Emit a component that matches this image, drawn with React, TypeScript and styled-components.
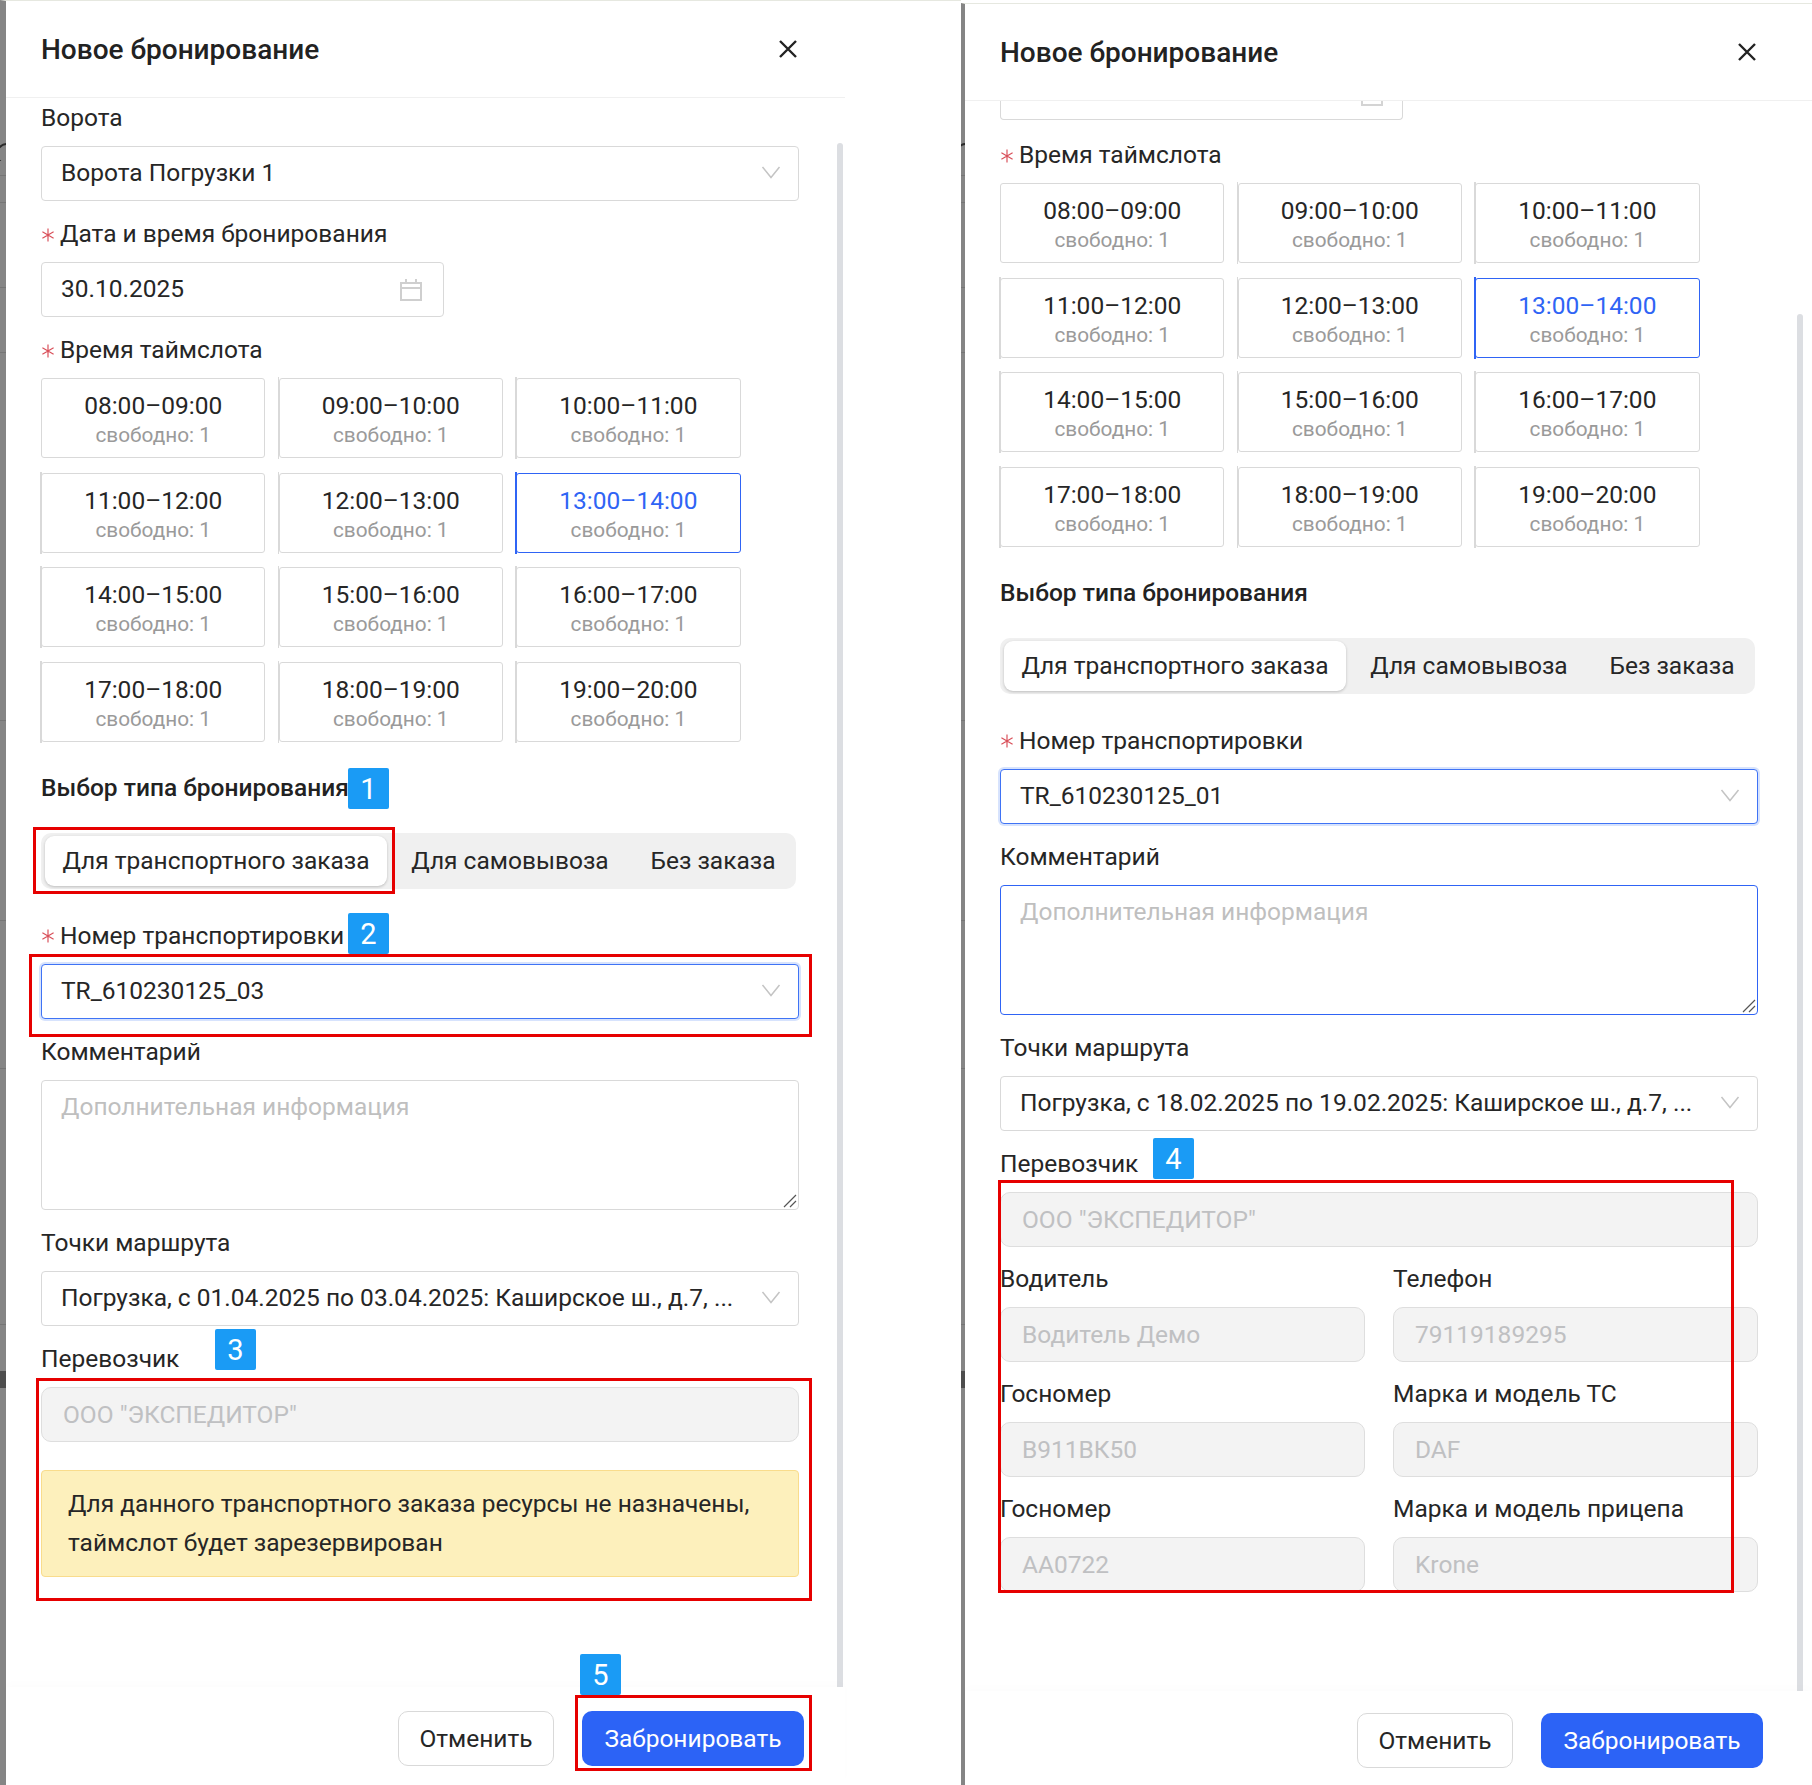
import React from 'react';
import styled, {createGlobalStyle} from 'styled-components';

const GlobalStyle = createGlobalStyle`
    html, body {
        margin: 0;
        padding: 0;
        background: #fff;
    }
    * {
        box-sizing: border-box;
    }
`;

const Page = styled.div`
    position: relative;
    width: 1812px;
    height: 1785px;
    display: grid;
    grid-template-columns: 961px 851px;
    overflow: hidden;
    background: #fff;
    font-family: Roboto, "Liberation Sans", sans-serif;
    font-size: 24.5px;
    color: #262626;
`;

const Panel = styled.section<{$top: number; $strip: number}>`
    position: relative;
    height: calc(100% - ${(p) => p.$top}px);
    margin-top: ${(p) => p.$top}px;
    display: flex;
    flex-direction: column;
    border-left: ${(p) => p.$strip}px solid #858585;
    border-top: 1px solid #e6e8e0;
`;

// what shows of the page behind the drawers in the grey strip
const BackdropLine = styled.div<{$top: number; $left: number; $width: number; $height?: number; $color?: string}>`
    position: absolute;
    top: ${(p) => p.$top}px;
    left: ${(p) => p.$left}px;
    width: ${(p) => p.$width}px;
    height: ${(p) => p.$height ?? 1}px;
    background: ${(p) => p.$color ?? '#757575'};
`;

const BackdropGlyph = styled.div<{$top: number; $left: number; $width: number}>`
    position: absolute;
    top: ${(p) => p.$top}px;
    left: ${(p) => p.$left}px;
    width: ${(p) => p.$width}px;
    height: 18px;
    overflow: hidden;

    &::before {
        content: "";
        position: absolute;
        top: 0;
        right: -12px;
        width: 18px;
        height: 18px;
        border: 2px solid #2a2a2a;
        border-radius: 50%;
    }
`;

const Header = styled.header<{$pad: number; $width: number}>`
    flex: none;
    width: ${(p) => p.$width}px;
    height: 97px;
    padding: 0 ${(p) => p.$pad}px 0 35px;
    display: flex;
    align-items: center;
    justify-content: space-between;
    border-bottom: 1px solid #f0f0f0;
`;

const Title = styled.h2`
    margin: 0;
    font-size: 28px;
    font-weight: 500;
    color: #222;
`;

const CloseButton = styled.button`
    width: 22px;
    height: 22px;
    padding: 0;
    border: 0;
    display: flex;
    background: none;
    color: #222;
`;

const Body = styled.div<{$width: number}>`
    position: relative;
    flex: 1;
    min-height: 0;
    width: ${(p) => p.$width}px;
    padding: 6px 0 0 35px;
    overflow: hidden;
`;

const Thumb = styled.div<{$top: number; $right: number}>`
    position: absolute;
    top: ${(p) => p.$top}px;
    bottom: 0;
    right: ${(p) => p.$right}px;
    width: 6px;
    border-radius: 3px 3px 0 0;
    background: #dcdee2;
`;

const Form = styled.div`
    width: 758px;
`;

const Field = styled.div<{$gap?: number}>`
    margin-bottom: ${(p) => p.$gap ?? 19}px;
`;

const Label = styled.label`
    height: 28px;
    margin-bottom: 14px;
    display: flex;
    align-items: center;
    line-height: 28px;
    color: #262626;
    white-space: nowrap;
`;

const Star = styled.svg`
    flex: none;
    width: 14px;
    height: 14px;
    margin: 1px 5px 0 0;
    color: #d9505a;
`;

const Control = styled.div<{$focus?: boolean; $width?: number}>`
    width: ${(p) => (p.$width ? `${p.$width}px` : '100%')};
    height: 55px;
    padding: 0 17px 2px 19px;
    display: flex;
    align-items: center;
    justify-content: space-between;
    border: 1px solid ${(p) => (p.$focus ? '#3f73f5' : '#d9d9d9')};
    border-radius: 4px;
    background: #fff;
    box-shadow: ${(p) => (p.$focus ? '0 0 0 2px #d7e3fd' : 'none')};
`;

const ControlText = styled.span`
    min-width: 0;
    overflow: hidden;
    white-space: nowrap;
    color: #262626;
`;

const Disabled = styled.div`
    height: 55px;
    padding: 0 21px;
    display: flex;
    align-items: center;
    border: 1px solid #dedede;
    border-radius: 10px;
    background: #f3f3f3;
    color: #bfc0c2;
`;

const DateStub = styled.div`
    position: relative;
    width: 403px;
    height: 19px;
    margin: -6px 0 21px;
    border: 1px solid #d9d9d9;
    border-top: 0;
    border-radius: 0 0 4px 4px;
`;

const DateStubIcon = styled.div`
    position: absolute;
    top: 0;
    right: 19px;
    width: 22px;
    height: 5px;
    border: 2px solid #d4d4d4;
    border-top: 0;
`;

const SlotGrid = styled.div`
    display: grid;
    grid-template-columns: repeat(3, 224.4px);
    grid-auto-rows: 80px;
    column-gap: 13.2px;
    row-gap: 14.5px;
`;

const Slot = styled.div<{$active?: boolean; $first?: boolean}>`
    position: relative;
    padding-top: 4px;
    display: flex;
    flex-direction: column;
    align-items: center;
    justify-content: center;
    border: 1px solid ${(p) => (p.$active ? '#2f64f5' : '#d9d9d9')};
    border-radius: 3px;
    color: ${(p) => (p.$active ? '#2f64f5' : '#262626')};

    &::before {
        content: ${(p) => (p.$first ? 'none' : '""')};
        position: absolute;
        top: -2px;
        bottom: -2px;
        left: -2px;
        width: 1.5px;
        background: ${(p) => (p.$active ? '#2f64f5' : '#d9d9d9')};
    }
`;

const SlotTime = styled.div`
    line-height: 30px;
`;

const SlotFree = styled.div`
    margin-top: 1px;
    font-size: 20.8px;
    line-height: 27px;
    color: #9a9a9a;
`;

const Heading = styled.h3`
    margin: 32px 0 31px;
    height: 28px;
    font-size: 24.5px;
    line-height: 28px;
    font-weight: 500;
    color: #222;
`;

const Segmented = styled.div`
    width: 755px;
    height: 56px;
    padding: 3px 3px 3px 4px;
    margin-bottom: 33px;
    display: flex;
    border-radius: 10px;
    background: #f0f0f0;
`;

const Segment = styled.div<{$active?: boolean; $width: number}>`
    flex: none;
    width: ${(p) => p.$width}px;
    display: flex;
    align-items: center;
    justify-content: center;
    border-radius: 9px;
    background: ${(p) => (p.$active ? '#fff' : 'transparent')};
    box-shadow: ${(p) => (p.$active ? '0 1px 3px rgba(0,0,0,.22)' : 'none')};
    white-space: nowrap;
`;

const TextArea = styled.div<{$focus?: boolean}>`
    position: relative;
    height: 130px;
    padding: 12px 19px;
    border: 1px solid ${(p) => (p.$focus ? '#2f64f5' : '#d9d9d9')};
    border-radius: 4px;
    line-height: 28px;
    color: #bfbfbf;
`;

const Resizer = styled.svg`
    position: absolute;
    right: 1px;
    bottom: 1px;
    width: 14px;
    height: 14px;
    color: #555;
`;

const CalendarSvg = styled.svg`
    margin: 2px 3px 0 0;
`;

const TwoColumns = styled.div`
    display: grid;
    grid-template-columns: 365px 365px;
    column-gap: 28px;
`;

const Alert = styled.div`
    height: 107px;
    margin-top: 28px;
    padding: 0 26px;
    display: flex;
    align-items: center;
    border: 1px solid #f9dc8c;
    border-radius: 4px;
    background: #fdf0bc;
    line-height: 39px;
    color: #262626;
`;

const Footer = styled.footer<{$pad: number; $height: number; $width: number; $top: number}>`
    position: relative;
    flex: none;
    width: ${(p) => p.$width}px;
    height: ${(p) => p.$height}px;
    padding: ${(p) => p.$top}px ${(p) => p.$pad}px 0 0;
    display: flex;
    justify-content: flex-end;
    gap: 28px;
    background: #fff;
    box-shadow: 0 -4px 8px rgba(0, 0, 0, .012);
`;

const ButtonBase = styled.button`
    height: 55px;
    border-radius: 10px;
    font-family: inherit;
    font-size: 24.5px;
`;

const CancelButton = styled(ButtonBase)`
    width: 156px;
    border: 1px solid #d9d9d9;
    background: #fff;
    color: #262626;
`;

const SubmitButton = styled(ButtonBase)`
    width: 222px;
    border: 0;
    background: #2c63f6;
    color: #fff;
`;

const Badge = styled.div<{$x: number; $y: number}>`
    position: absolute;
    left: ${(p) => p.$x}px;
    top: ${(p) => p.$y}px;
    width: 41px;
    height: 41px;
    display: flex;
    align-items: center;
    justify-content: center;
    background: #1a9bf5;
    border-radius: 2px;
    font-size: 29px;
    color: #fff;
`;

const Frame = styled.div<{$x: number; $y: number; $w: number; $h: number}>`
    position: absolute;
    left: ${(p) => p.$x}px;
    top: ${(p) => p.$y}px;
    width: ${(p) => p.$w}px;
    height: ${(p) => p.$h}px;
    border: 3px solid #e60000;
    pointer-events: none;
`;

const RequiredMark = () => (
    <Star viewBox="0 0 13 13" fill="none" stroke="currentColor" strokeWidth="1.1">
        <path d="M6.5 0.5 V12.5 M1.3 3.5 L11.7 9.5 M11.7 3.5 L1.3 9.5" />
    </Star>
);

const Chevron = () => (
    <svg width="20" height="13" viewBox="0 0 20 13" fill="none" stroke="#c4c4c4" strokeWidth="1.5">
        <path d="M1.5 1 L10 11.5 L18.5 1" />
    </svg>
);

const CalendarIcon = () => (
    <CalendarSvg width="24" height="24" viewBox="0 0 24 24" fill="none" stroke="#cfcfcf" strokeWidth="2">
        <path d="M2 5h20v17H2zM2 10h20M7 1v5M17 1v5" />
    </CalendarSvg>
);

const CloseIcon = () => (
    <svg width="22" height="22" viewBox="0 0 22 22" fill="none" stroke="currentColor" strokeWidth="2.4">
        <path d="M3 3 L19 19 M19 3 L3 19" />
    </svg>
);

const ResizeIcon = () => (
    <Resizer viewBox="0 0 14 14" fill="none" stroke="currentColor" strokeWidth="1.2">
        <path d="M1 13 L13 1 M7 13 L13 7" />
    </Resizer>
);

const SLOTS = [
    '08:00–09:00', '09:00–10:00', '10:00–11:00',
    '11:00–12:00', '12:00–13:00', '13:00–14:00',
    '14:00–15:00', '15:00–16:00', '16:00–17:00',
    '17:00–18:00', '18:00–19:00', '19:00–20:00',
];

const BACKDROP_LINES = [175, 202, 287, 352, 1324, 1068, 720, 920];

function Backdrop(props: {strip: number; top: number}) {
    return (
        <>
            {BACKDROP_LINES.map((y) => (
                <BackdropLine key={y} $top={y - props.top} $left={-props.strip} $width={props.strip} />
            ))}
            <BackdropLine $top={1371 - props.top} $left={-props.strip} $width={props.strip} $height={17} $color="#4d4d4d" />
            <BackdropGlyph $top={143 - props.top} $left={-props.strip} $width={props.strip} />
        </>
    );
}

function TimeSlots() {
    return (
        <Field $gap={0}>
            <Label><RequiredMark />{'Время таймслота'}</Label>
            <SlotGrid>
                {SLOTS.map((time, i) => (
                    <Slot key={time} $active={i === 5} $first={i === 0}>
                        <SlotTime>{time}</SlotTime>
                        <SlotFree>{'свободно: 1'}</SlotFree>
                    </Slot>
                ))}
            </SlotGrid>
        </Field>
    );
}

function BookingType() {
    return (
        <>
            <Heading>{'Выбор типа бронирования'}</Heading>
            <Segmented>
                <Segment $active $width={342}>{'Для транспортного заказа'}</Segment>
                <Segment $width={246}>{'Для самовывоза'}</Segment>
                <Segment $width={160}>{'Без заказа'}</Segment>
            </Segmented>
        </>
    );
}

function SelectField(props: {label: string; value: string; required?: boolean; focus?: boolean}) {
    return (
        <Field>
            <Label>{props.required && <RequiredMark />}{props.label}</Label>
            <Control $focus={props.focus}>
                <ControlText>{props.value}</ControlText>
                <Chevron />
            </Control>
        </Field>
    );
}

function CommentField(props: {focus?: boolean}) {
    return (
        <Field>
            <Label>{'Комментарий'}</Label>
            <TextArea $focus={props.focus}>
                {'Дополнительная информация'}
                <ResizeIcon />
            </TextArea>
        </Field>
    );
}

function ReadOnlyField(props: {label: string; value: string}) {
    return (
        <Field $gap={18}>
            <Label>{props.label}</Label>
            <Disabled>{props.value}</Disabled>
        </Field>
    );
}

function BookingFooter(props: {pad: number; height: number; width: number; top: number}) {
    return (
        <Footer $pad={props.pad} $height={props.height} $width={props.width} $top={props.top}>
            <CancelButton>{'Отменить'}</CancelButton>
            <SubmitButton>{'Забронировать'}</SubmitButton>
        </Footer>
    );
}

export default function App() {
    return (
        <Page>
            <GlobalStyle />
            <Panel $top={0} $strip={6}>
                <Backdrop strip={6} top={1} />
                <Header $pad={46} $width={839}>
                    <Title>{'Новое бронирование'}</Title>
                    <CloseButton><CloseIcon /></CloseButton>
                </Header>
                <Body $width={839}>
                    <Form>
                        <SelectField label="Ворота" value="Ворота Погрузки 1" />
                        <Field>
                            <Label><RequiredMark />{'Дата и время бронирования'}</Label>
                            <Control $width={403}>
                                <ControlText>{'30.10.2025'}</ControlText>
                                <CalendarIcon />
                            </Control>
                        </Field>
                        <TimeSlots />
                        <BookingType />
                        <SelectField label="Номер транспортировки" value="TR_610230125_03" required focus />
                        <CommentField />
                        <SelectField label="Точки маршрута" value="Погрузка, с 01.04.2025 по 03.04.2025: Каширское ш., д.7, ..." />
                        <Field $gap={0}>
                            <Label>{'Перевозчик'}</Label>
                            <Disabled>{'ООО "ЭКСПЕДИТОР"'}</Disabled>
                        </Field>
                        <Alert>{'Для данного транспортного заказа ресурсы не назначены, таймслот будет зарезервирован'}</Alert>
                    </Form>
                    <Thumb $top={45} $right={2} />
                </Body>
                <BookingFooter pad={41} height={98} width={839} top={24} />
            </Panel>

            <Panel $top={3} $strip={4}>
                <Backdrop strip={4} top={4} />
                <Header $pad={54} $width={847}>
                    <Title>{'Новое бронирование'}</Title>
                    <CloseButton><CloseIcon /></CloseButton>
                </Header>
                <Body $width={847}>
                    <Form>
                        <DateStub><DateStubIcon /></DateStub>
                        <TimeSlots />
                        <BookingType />
                        <SelectField label="Номер транспортировки" value="TR_610230125_01" required focus />
                        <CommentField focus />
                        <SelectField label="Точки маршрута" value="Погрузка, с 18.02.2025 по 19.02.2025: Каширское ш., д.7, ..." />
                        <ReadOnlyField label="Перевозчик" value={'ООО "ЭКСПЕДИТОР"'} />
                        <TwoColumns>
                            <ReadOnlyField label="Водитель" value="Водитель Демо" />
                            <ReadOnlyField label="Телефон" value="79119189295" />
                            <ReadOnlyField label="Госномер" value="В911ВК50" />
                            <ReadOnlyField label="Марка и модель ТС" value="DAF" />
                            <ReadOnlyField label="Госномер" value="АА0722" />
                            <ReadOnlyField label="Марка и модель прицепа" value="Krone" />
                        </TwoColumns>
                    </Form>
                    <Thumb $top={213} $right={9} />
                </Body>
                <BookingFooter pad={49} height={94} width={847} top={22} />
            </Panel>

            <Frame $x={33} $y={827} $w={362} $h={67} />
            <Frame $x={29} $y={954} $w={783} $h={83} />
            <Frame $x={36} $y={1378} $w={776} $h={223} />
            <Frame $x={575} $y={1695} $w={237} $h={76} />
            <Frame $x={998} $y={1180} $w={736} $h={413} />
            <Badge $x={348} $y={768}>1</Badge>
            <Badge $x={348} $y={913}>2</Badge>
            <Badge $x={215} $y={1329}>3</Badge>
            <Badge $x={1153} $y={1138}>4</Badge>
            <Badge $x={580} $y={1654}>5</Badge>
        </Page>
    );
}
